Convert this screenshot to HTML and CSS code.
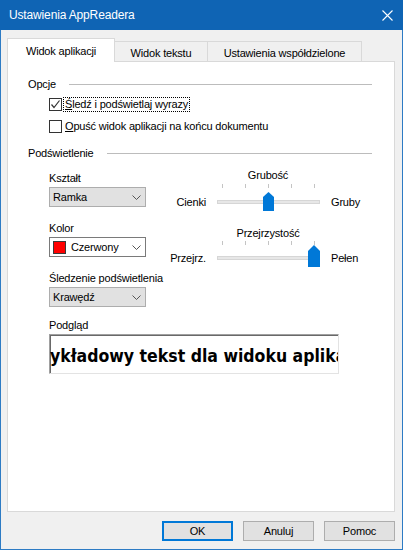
FILE: index.html
```html
<!DOCTYPE html>
<html lang="pl">
<head>
<meta charset="utf-8">
<title>Ustawienia AppReadera</title>
<link rel="stylesheet" href="styles.css">
</head>
<body>
<div class="window">
  <div class="titlebar">
    <span class="title">Ustawienia AppReadera</span>
    <svg class="close" width="11" height="11" viewBox="0 0 11 11"><path d="M0.5 0.5 L10.5 10.5 M10.5 0.5 L0.5 10.5" stroke="#fff" stroke-width="1.1" fill="none"/></svg>
  </div>
  <div class="body">
    <div class="tabs">
      <div class="tab tab-active">Widok aplikacji</div>
      <div class="tab tab-text">Widok tekstu</div>
      <div class="tab tab-shared">Ustawienia współdzielone</div>
    </div>
    <div class="panel">
      <div class="group-header"><span>Opcje</span><span class="rule"></span></div>
      <div class="check-row">
        <span class="checkbox"><svg width="11" height="11" viewBox="0 0 11 11"><polyline points="1.5,5.5 4,8.5 9.5,1.5" fill="none" stroke="#333" stroke-width="1.2"/></svg></span>
        <span class="check-text focus"><u>Ś</u>ledź i podświetlaj wyrazy</span>
      </div>
      <div class="check-row">
        <span class="checkbox"></span>
        <span class="check-text"><u>O</u>puść widok aplikacji na końcu dokumentu</span>
      </div>
      <div class="group-header group-header-2"><span>Podświetlenie</span><span class="rule"></span></div>
      <div class="highlight">
        <div class="left-col">
          <div class="field">
            <div class="field-label">Kształt</div>
            <div class="combo"><span class="combo-text">Ramka</span><svg class="chev" width="9" height="5" viewBox="0 0 9 5"><polyline points="0.5,0.5 4.5,4.5 8.5,0.5" fill="none" stroke="#555" stroke-width="1"/></svg></div>
          </div>
          <div class="field">
            <div class="field-label">Kolor</div>
            <div class="combo combo-white"><span class="swatch"></span><span class="combo-text">Czerwony</span><svg class="chev" width="9" height="5" viewBox="0 0 9 5"><polyline points="0.5,0.5 4.5,4.5 8.5,0.5" fill="none" stroke="#555" stroke-width="1"/></svg></div>
          </div>
          <div class="field">
            <div class="field-label">Śledzenie podświetlenia</div>
            <div class="combo"><span class="combo-text">Krawędź</span><svg class="chev" width="9" height="5" viewBox="0 0 9 5"><polyline points="0.5,0.5 4.5,4.5 8.5,0.5" fill="none" stroke="#555" stroke-width="1"/></svg></div>
          </div>
        </div>
        <div class="right-col">
          <div class="slider-block">
            <div class="slider-title">Grubość</div>
            <div class="side-label left">Cienki</div>
            <div class="slider">
              <div class="ticks"><i></i><i></i><i></i><i></i><i></i></div>
              <div class="track"></div>
              <svg class="thumb thumb-1" width="11" height="19" viewBox="0 0 11 19"><path d="M5.5 0 L11 5 L11 19 L0 19 L0 5 Z" fill="#0078d7"/></svg>
            </div>
            <div class="side-label right">Gruby</div>
          </div>
          <div class="slider-block slider-block-2">
            <div class="slider-title">Przejrzystość</div>
            <div class="side-label left">Przejrz.</div>
            <div class="slider">
              <div class="ticks"><i></i><i></i><i></i><i></i><i></i></div>
              <div class="track"></div>
              <svg class="thumb thumb-2" width="12" height="22" viewBox="0 0 12 22"><path d="M6 0 L12 6 L12 22 L0 22 L0 6 Z" fill="#0078d7"/></svg>
            </div>
            <div class="side-label right">Pełen</div>
          </div>
        </div>
      </div>
      <div class="preview-label">Podgląd</div>
      <div class="preview"><span class="preview-text">Przykładowy tekst dla widoku aplikacji</span></div>
    </div>
    <div class="buttons">
      <div class="btn btn-default">OK</div>
      <div class="btn">Anuluj</div>
      <div class="btn">Pomoc</div>
    </div>
  </div>
</div>
</body>
</html>
```

FILE: styles.css
```css
* { box-sizing: border-box; }
html, body { margin: 0; padding: 0; background: #f0f0f0; }
body {
  font-family: "Liberation Sans", Arial, sans-serif;
  font-size: 11px;
  letter-spacing: -0.18px;
  color: #000;
}
.window {
  width: 403px;
  height: 550px;
  background: #f0f0f0;
  border: 1px solid #2d7bc4;
  border-top: none;
  display: flex;
  flex-direction: column;
}
.titlebar {
  height: 30px;
  margin: 0 -1px;
  background: #0f64b4;
  display: flex;
  align-items: center;
  justify-content: space-between;
  padding: 0 10px 0 9px;
}
.title {
  color: #fff;
  font-size: 12px;
  letter-spacing: -0.15px;
}
.close { display: block; }
.body {
  padding: 8px 7px 0 6px;
  display: flex;
  flex-direction: column;
}
.tabs {
  display: flex;
  align-items: flex-end;
  height: 24px;
  margin-bottom: -1px;
  position: relative;
  z-index: 1;
}
.tab {
  border: 1px solid #d9d9d9;
  border-bottom: none;
  background: #f0f0f0;
  display: flex;
  align-items: center;
  justify-content: center;
  white-space: nowrap;
}
.tab-active {
  width: 108px;
  height: 24px;
  background: #fff;
  position: relative;
  z-index: 2;
  padding-top: 1px;
}
.tab-text {
  width: 94px;
  height: 20px;
  margin-left: -1px;
  margin-bottom: 1px;
  padding-top: 2px;
}
.tab-shared {
  width: 155px;
  height: 20px;
  margin-left: -1px;
  margin-bottom: 1px;
  padding-top: 2px;
}
.panel {
  height: 451px;
  background: #fff;
  border: 1px solid #d9d9d9;
  padding-top: 15px;
}
.group-header {
  height: 14px;
  display: flex;
  align-items: center;
  gap: 13px;
  padding: 0 22px 0 20px;
  margin-bottom: 2px;
}
.group-header .rule {
  flex: 1;
  height: 1px;
  background: #bcbcbc;
}
.group-header-2 {
  margin-top: 9px;
  margin-bottom: 0;
}
.check-row {
  height: 22px;
  margin-left: 41px;
  display: flex;
  align-items: center;
}
.checkbox {
  width: 13px;
  height: 13px;
  border: 1px solid #333;
  background: #fff;
  display: flex;
  align-items: center;
  justify-content: center;
  flex: none;
}
.checkbox svg { display: block; }
.check-text {
  margin-left: 1px;
  padding: 0 1px;
  line-height: 13px;
  border: 1px solid transparent;
  white-space: nowrap;
}
.check-text.focus { border: 1px dotted #000; }
.highlight {
  display: flex;
  margin-top: 8px;
  padding-left: 41px;
  gap: 14px;
}
.left-col {
  width: 97px;
  padding-top: 2px;
  display: flex;
  flex-direction: column;
  gap: 13px;
}
.field-label {
  height: 17px;
  line-height: 17px;
  white-space: nowrap;
}
.combo {
  height: 20px;
  width: 97px;
  border: 1px solid #adadad;
  background: #e1e1e1;
  display: flex;
  align-items: center;
  padding: 0 4px 0 3px;
}
.combo-white {
  background: #fff;
  border-color: #7a7a7a;
}
.combo-text { flex: 1; white-space: nowrap; }
.chev { display: block; flex: none; }
.swatch {
  width: 13px;
  height: 13px;
  background: #ff0000;
  border: 1px solid #3a3a3a;
  margin-right: 5px;
  flex: none;
}
.right-col {
  display: flex;
  flex-direction: column;
}
.slider-block {
  display: grid;
  grid-template-columns: 46px 114px auto;
  grid-template-rows: 14px 30px;
  column-gap: 5px;
}
.slider-block-2 { margin-top: 14px; }
.slider-title {
  grid-column: 2;
  grid-row: 1;
  text-align: center;
  line-height: 14px;
  white-space: nowrap;
}
.side-label {
  grid-row: 2;
  line-height: 14px;
  margin-top: 13px;
  white-space: nowrap;
}
.side-label.left { grid-column: 1; text-align: right; }
.side-label.right { grid-column: 3; margin-left: 1px; }
.slider-block-2 .side-label { margin-top: 11px; }
.slider {
  grid-column: 2;
  grid-row: 2;
  position: relative;
}
.ticks {
  display: flex;
  gap: 22px;
  padding-left: 11px;
  margin-top: 2px;
  height: 4px;
}
.ticks i {
  display: block;
  width: 1px;
  height: 4px;
  background: #c4c4c4;
}
.track {
  margin-top: 12px;
  margin-left: 6px;
  width: 103px;
  height: 4px;
  background: #e7e7e7;
  border: 1px solid #d6d6d6;
}
.slider-block-2 .ticks { margin-top: 1px; }
.slider-block-2 .track { margin-top: 11px; }
.thumb { position: absolute; display: block; }
.thumb-1 { left: 52px; top: 10px; }
.thumb-2 { left: 97px; top: 5px; }
.preview-label {
  margin-top: 10px;
  margin-left: 41px;
  height: 17px;
  line-height: 17px;
}
.preview {
  margin-left: 41px;
  width: 290px;
  height: 40px;
  border: 1px solid;
  border-color: #a0a0a0 #e3e3e3 #e3e3e3 #a0a0a0;
  box-shadow: inset 1px 1px 0 #696969;
  display: flex;
  align-items: center;
  justify-content: center;
  overflow: hidden;
  padding-top: 3px;
}
.preview-text {
  flex: none;
  white-space: nowrap;
  font-family: "DejaVu Sans Condensed", "DejaVu Sans", sans-serif;
  font-stretch: condensed;
  font-weight: bold;
  font-size: 17.5px;
  letter-spacing: 0;
}
.buttons {
  margin-top: 9px;
  display: flex;
  justify-content: flex-end;
  gap: 10px;
}
.btn {
  width: 71px;
  height: 20px;
  border: 1px solid #adadad;
  background: #e1e1e1;
  display: flex;
  align-items: center;
  justify-content: center;
}
.btn-default {
  border-color: #0078d7;
  box-shadow: inset 0 0 0 1px #0078d7;
}
```
